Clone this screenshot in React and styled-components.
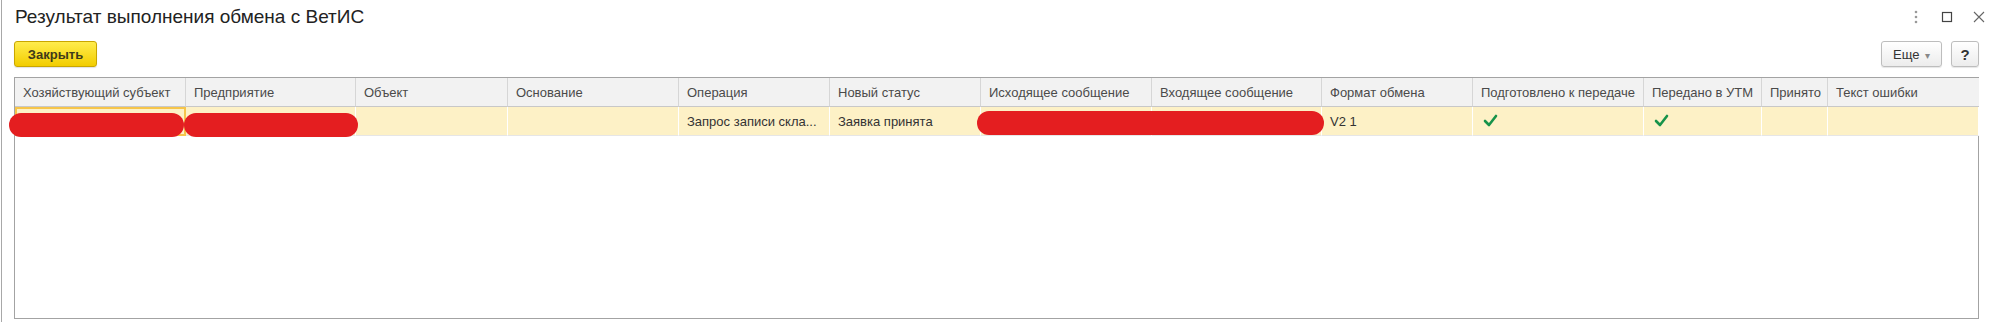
import styled, { createGlobalStyle } from "styled-components"

const GlobalStyle = createGlobalStyle`
body {
    margin: 0;
    background: #ffffff;
    font-family: "Liberation Sans", Arial, sans-serif;
}
`

const columns = [
    { title: "Хозяйствующий субъект", width: 171 },
    { title: "Предприятие", width: 170 },
    { title: "Объект", width: 152 },
    { title: "Основание", width: 171 },
    { title: "Операция", width: 151 },
    { title: "Новый статус", width: 151 },
    { title: "Исходящее сообщение", width: 171 },
    { title: "Входящее сообщение", width: 170 },
    { title: "Формат обмена", width: 151 },
    { title: "Подготовлено к передаче", width: 171 },
    { title: "Передано в УТМ", width: 118 },
    { title: "Принято", width: 66 },
    { title: "Текст ошибки", width: 151 },
]

const row = ["", "", "", "", "Запрос записи скла...", "Заявка принята", "", "", "V2 1", true, true, "", ""]

const gridColumns = columns.map((c) => c.width + "px").join(" ")

function Check() {
    return (
        <svg width="18" height="14" viewBox="0 0 18 14">
            <polyline points="4,7 8,11 15,2" fill="none" stroke="#16934a" strokeWidth="2.6" strokeLinecap="round" strokeLinejoin="round" />
        </svg>
    )
}

export default function App() {
    return (
        <Window>
            <GlobalStyle />
            <TitleBar>
                <Title>Результат выполнения обмена с ВетИС</Title>
                <WindowControls>
                    <svg width="10" height="14" viewBox="0 0 10 14">
                        <circle cx="5" cy="2" r="1.3" fill="#999" />
                        <circle cx="5" cy="7" r="1.3" fill="#999" />
                        <circle cx="5" cy="12" r="1.3" fill="#999" />
                    </svg>
                    <svg width="12" height="12" viewBox="0 0 12 12">
                        <rect x="1.5" y="1.5" width="9" height="9" fill="none" stroke="#444" strokeWidth="1.2" />
                    </svg>
                    <svg width="12" height="12" viewBox="0 0 12 12">
                        <path d="M1 1 L11 11 M11 1 L1 11" stroke="#666" strokeWidth="1.1" />
                    </svg>
                </WindowControls>
            </TitleBar>
            <Toolbar>
                <CloseButton>Закрыть</CloseButton>
                <ToolGroup>
                    <GrayButton wide>
                        Еще <Caret>▾</Caret>
                    </GrayButton>
                    <GrayButton>?</GrayButton>
                </ToolGroup>
            </Toolbar>
            <TableWrap>
                <Grid>
                    {columns.map((c) => (
                        <HeadCell key={c.title}>{c.title}</HeadCell>
                    ))}
                    {row.map((v, i) => (
                        <Cell key={i} focused={i === 0}>
                            {v === true ? <Check /> : v}
                        </Cell>
                    ))}
                </Grid>
                <Blot left={-6} top={35} width={175} />
                <Blot left={169} top={35} width={174} />
                <Blot left={962} top={33} width={347} />
            </TableWrap>
        </Window>
    )
}

const Window = styled.div`
box-sizing: border-box;
height: 322px;
margin-left: 1px;
border-left: 1px solid #a8a8a8;
padding: 0 15px 3px 12px;
display: flex;
flex-direction: column;
`

const TitleBar = styled.div`
height: 36px;
display: flex;
align-items: center;
justify-content: space-between;
`

const Title = styled.h1`
margin: 0 0 2px 1px;
font-size: 19px;
font-weight: 400;
color: #222222;
`

const WindowControls = styled.div`
display: flex;
align-items: center;
gap: 20px;
margin-right: -6px;
margin-bottom: 2px;
`

const Toolbar = styled.div`
margin-top: 5px;
height: 26px;
display: flex;
justify-content: space-between;
align-items: center;
`

const CloseButton = styled.button`
box-sizing: border-box;
width: 83px;
height: 26px;
padding: 0;
background: linear-gradient(#ffec4d, #f2cd00);
border: 1px solid #c9a600;
border-radius: 3px;
font-family: "Liberation Sans", Arial, sans-serif;
font-size: 13px;
font-weight: 700;
color: #403a1a;
box-shadow: 0 1px 1px rgba(0, 0, 0, 0.12);
`

const ToolGroup = styled.div`
display: flex;
gap: 9px;
`

const GrayButton = styled.button`
box-sizing: border-box;
width: ${(p) => (p.wide ? "61px" : "28px")};
height: 26px;
padding: 0;
background: linear-gradient(#ffffff, #ececec);
border: 1px solid #bdbdbd;
border-radius: 3px;
font-family: "Liberation Sans", Arial, sans-serif;
font-size: ${(p) => (p.wide ? "13px" : "15px")};
font-weight: ${(p) => (p.wide ? 400 : 700)};
color: #333333;
box-shadow: 0 1px 1px rgba(0, 0, 0, 0.1);
`

const Caret = styled.span`
font-size: 10px;
font-weight: 400;
color: #888888;
margin-left: 2px;
`

const TableWrap = styled.div`
position: relative;
margin-top: 10px;
flex: 1;
border: 1px solid #a3a3a3;
`

const Grid = styled.div`
display: grid;
grid-template-columns: ${gridColumns};
grid-auto-rows: 29px;
`

const HeadCell = styled.div`
box-sizing: border-box;
padding-left: 8px;
display: flex;
align-items: center;
background: #f2f2f2;
border-right: 1px solid #d6d6d6;
border-bottom: 1px solid #c8c8c8;
font-size: 13px;
color: #4a4a4a;
white-space: nowrap;
overflow: hidden;
&:nth-child(13) {
    border-right: none;
}
`

const Cell = styled.div`
box-sizing: border-box;
padding-left: 8px;
display: flex;
align-items: center;
background: #fdf1c6;
border-right: 1px solid #ffffff;
border-bottom: 1px solid #e6e6e6;
font-size: 13px;
color: #333333;
white-space: nowrap;
overflow: hidden;
${(p) => p.focused && "outline: 2px solid #f6c54a; outline-offset: -2px;"}
`

const Blot = styled.div`
position: absolute;
left: ${(p) => p.left}px;
top: ${(p) => p.top}px;
width: ${(p) => p.width}px;
height: 24px;
border-radius: 12px;
background: #e41e20;
`
